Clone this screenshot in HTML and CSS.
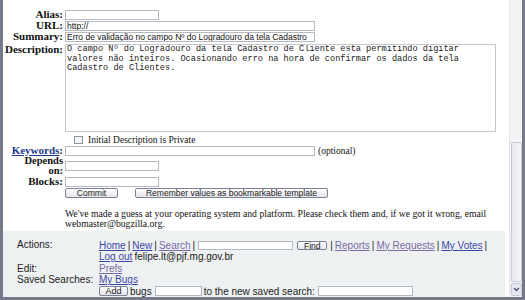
FILE: index.html
```html
<!DOCTYPE html>
<html lang="pt">
<head>
    <meta charset="UTF-8">
    <title>Enter Bug</title>
    <link rel="stylesheet" href="styles.css">
</head>
<body>
    <div class="frame">
        <div class="page">
            <form class="bug-form">
                <div class="row">
                    <label class="field-label">Alias:</label>
                    <input class="short" type="text">
                </div>
                <div class="row">
                    <label class="field-label">URL:</label>
                    <input class="long" type="text" value="http://">
                </div>
                <div class="row">
                    <label class="field-label">Summary:</label>
                    <input class="long" type="text" value="Erro de validação no campo Nº do Logradouro da tela Cadastro">
                </div>
                <div class="row desc-row">
                    <label class="field-label">Description:</label>
                    <textarea class="comment">O campo Nº do Logradouro da tela Cadastro de Cliente esta permitindo digitar valores não inteiros. Ocasionando erro na hora de confirmar os dados da tela Cadastro de Clientes.</textarea>
                </div>
                <div class="row check-row">
                    <span class="checkbox"></span>
                    <span class="serif">Initial Description is Private</span>
                </div>
                <div class="row">
                    <label class="field-label"><a href="#">Keywords</a>:</label>
                    <input class="long" type="text">
                    <span class="serif optional">(optional)</span>
                </div>
                <div class="row depends-row">
                    <label class="field-label">Depends<br>on:</label>
                    <input class="short" type="text">
                </div>
                <div class="row">
                    <label class="field-label">Blocks:</label>
                    <input class="short" type="text">
                </div>
                <div class="row button-row">
                    <button type="button" class="btn commit">Commit</button>
                    <button type="button" class="btn remember">Remember values as bookmarkable template</button>
                </div>
                <p class="guess">We've made a guess at your operating system and platform. Please check them and, if we got it wrong, email webmaster@bugzilla.org.</p>
            </form>

            <div class="footer">
                <div class="foot-label">Actions:</div>
                <div class="foot-links">
                    <div class="foot-line">
                        <a href="#">Home</a> | <a href="#">New</a> | <a href="#" class="visited">Search</a> |
                        <input class="find-input" type="text">
                        <button type="button" class="btn find">Find</button>
                        | <a href="#" class="visited">Reports</a> | <a href="#" class="visited">My Requests</a> | <a href="#">My Votes</a> |
                    </div>
                    <div class="foot-line"><a href="#">Log out</a> felipe.lt@pjf.mg.gov.br</div>
                </div>
                <div class="foot-label">Edit:</div>
                <div class="foot-line"><a href="#" class="visited">Prefs</a></div>
                <div class="foot-label">Saved Searches:</div>
                <div class="foot-line"><a href="#">My Bugs</a></div>
                <div class="foot-label"></div>
                <div class="foot-line">
                    <button type="button" class="btn add">Add</button> bugs
                    <input class="bugs-input" type="text">
                    to the new saved search:
                    <input class="search-name" type="text">
                </div>
            </div>
        </div>
        <div class="scrollbar">
            <div class="thumb"></div>
            <div class="arrow">
                <svg width="7" height="5" viewBox="0 0 7 5"><path d="M1 1 L3.5 3.5 L6 1" fill="none" stroke="#4d5270" stroke-width="1.4"/></svg>
            </div>
        </div>
    </div>
</body>
</html>
```

FILE: styles.css
```css
body { margin: 0; width: 525px; height: 300px; overflow: hidden; background: #fff; }
.frame { display: flex; height: 300px; box-sizing: border-box; border-left: 3px solid #767989; border-right: 3px solid #767989; border-bottom: 3px solid #767989; }
.page { flex: 1; display: flex; flex-direction: column; background: #fff; }

.bug-form { padding-top: 9px; font-family: "Liberation Serif", serif; }
.row { display: flex; align-items: center; height: 11px; }
.field-label { width: 60px; margin-right: 2px; text-align: right; font-weight: bold; font-size: 11px; line-height: 11px; color: #111; }
.field-label a { color: #1b3a8c; }
input { font-family: "Liberation Sans", sans-serif; font-size: 8.5px; height: 10px; box-sizing: border-box; border: 1px solid #b4b8c0; padding: 0 1px; margin: 0; background: #fff; color: #111; }
.short { width: 94px; }
.long { width: 250px; }

.desc-row { height: auto; align-items: flex-start; margin-top: 2px; }
.comment { width: 431px; height: 88px; box-sizing: border-box; margin: 0; border: 1px solid #c4c8cc; padding: 0 1px; resize: none; font-family: "Liberation Mono", monospace; font-size: 8.6px; line-height: 9.7px; color: #222; overflow: hidden; }

.check-row { margin-top: 2px; padding-left: 71px; }
.checkbox { width: 7px; height: 6px; border: 1px solid #8c93a0; background: #f4f4f4; margin-right: 5px; }
.serif { font-family: "Liberation Serif", serif; font-size: 9.5px; color: #111; }
.optional { margin-left: 3px; }

.depends-row { height: 20px; }
.depends-row .field-label { font-size: 10.5px; line-height: 10px; }
.button-row { padding-left: 62px; }
.btn { font-family: "Liberation Sans", sans-serif; font-size: 8.5px; height: 10px; line-height: 8px; padding: 0; margin: 0; border: 1px solid #7c8196; border-radius: 2px; background: linear-gradient(#ffffff, #e4e4ea); color: #222; }
.commit { width: 53px; }
.remember { width: 193px; margin-left: 17px; }

.guess { margin: 11px 0 0; padding: 0 14px 0 62px; font-size: 9.7px; line-height: 10px; color: #111; }

.footer { margin: 2px 4px 0 0; flex: 1; background: #eef1f1; padding: 8px 0 0 14px; display: grid; grid-template-columns: 82px 1fr; grid-auto-rows: auto; font-family: "Liberation Sans", sans-serif; font-size: 10px; line-height: 11px; color: #222; }
.foot-label { color: #222; }
.foot-line { display: flex; align-items: center; gap: 2px; white-space: nowrap; min-height: 11px; }
.foot-links .foot-line:first-child { height: 12px; }
.footer a { color: #3b47a6; text-decoration: underline; }
.footer a.visited { color: #7a6aa6; }
.find-input { width: 95px; height: 9px; margin-left: 1px; }
.find { width: 30px; height: 9px; margin: 0 1px 0 2px; }
.add { width: 29px; height: 10px; font-size: 9px; }
.bugs-input { width: 47px; height: 10px; margin-left: 1px; }
.search-name { width: 95px; height: 10px; margin-left: 1px; }

.scrollbar { width: 12px; display: flex; flex-direction: column; background: #f3f3f5; border-left: 1px solid #e4e4e8; }
.thumb { margin: 142px 0 0 1px; flex: 1; border: 1px solid #c6c9d6; border-radius: 2px; background: linear-gradient(90deg, #e9e9ef, #f4f4f8); }
.arrow { height: 11px; display: flex; align-items: center; justify-content: center; margin: 1px 0 1px 1px; border: 1px solid #c6c9d6; border-radius: 2px; background: #e8e9f0; }
```
